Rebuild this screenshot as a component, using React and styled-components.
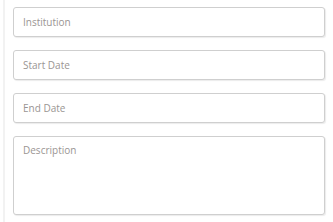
import React from 'react'
import styled, { createGlobalStyle } from 'styled-components'

const GlobalStyle = createGlobalStyle`
  body {
    margin: 0;
    background: #fff;
    font-family: "Open Sans", "Liberation Sans", sans-serif;
  }
`

const Page = styled.div`
  height: 222px;
  padding-left: 3px;
  box-sizing: border-box;
`

const Form = styled.form`
  height: 100%;
  border-left: 2px solid #f2f2f2;
  padding: 7px 8px 0 8px;
  box-sizing: border-box;
  display: flex;
  flex-direction: column;
  gap: 13px;
`

const fieldStyles = `
  width: 100%;
  box-sizing: border-box;
  border: 1px solid #cfcfcf;
  border-radius: 3px;
  box-shadow: 1px 1px 1px rgba(0, 0, 0, 0.08);
  padding: 0 9px;
  font-family: "Open Sans", "Liberation Sans", sans-serif;
  font-size: 10px;
  color: #333;
  background: #fff;
  outline: none;

  &::placeholder {
    color: #9a9593;
  }
`

const Input = styled.input`
  ${fieldStyles}
  height: 30px;
`

const TextArea = styled.textarea`
  ${fieldStyles}
  height: 79px;
  padding-top: 6px;
  resize: none;
`

export default function App() {
  return (
    <>
      <GlobalStyle />
      <Page>
        <Form>
          <Input placeholder="Institution" />
          <Input placeholder="Start Date" />
          <Input placeholder="End Date" />
          <TextArea placeholder="Description" />
        </Form>
      </Page>
    </>
  )
}
